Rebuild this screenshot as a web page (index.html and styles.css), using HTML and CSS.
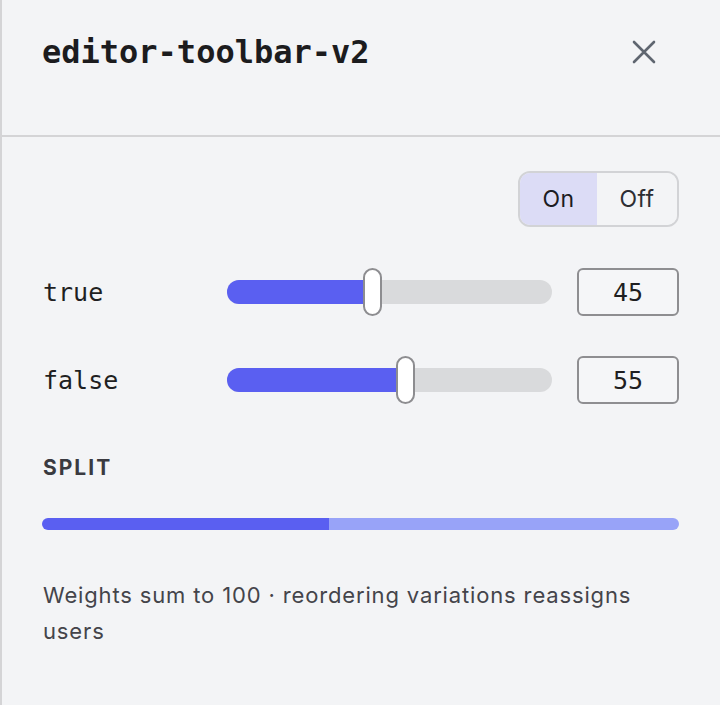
FILE: index.html
```html
<!DOCTYPE html>
<html>
<head>
<meta charset="utf-8">
<link rel="stylesheet" href="styles.css">
</head>
<body>
<aside class="panel">
  <header class="panel-header">
    <h1 class="title">editor-toolbar-v2</h1>
    <button class="close" aria-label="Close">
      <svg width="24" height="24" viewBox="0 0 24 24"><path d="M2 2L22 22M22 2L2 22" stroke="#5f6670" stroke-width="2.6" stroke-linecap="round" fill="none"/></svg>
    </button>
  </header>
  <section class="panel-body">
    <div class="toggle-row">
      <div class="segmented">
        <span class="seg seg-on">On</span>
        <span class="seg seg-off">Off</span>
      </div>
    </div>
    <div class="weights">
      <div class="weight-row">
        <span class="var-label">true</span>
        <div class="track"><div class="fill" style="width:45%"></div><div class="thumb" style="left:45%"></div></div>
        <div class="num">45</div>
      </div>
      <div class="weight-row">
        <span class="var-label">false</span>
        <div class="track"><div class="fill" style="width:55%"></div><div class="thumb" style="left:55%"></div></div>
        <div class="num">55</div>
      </div>
    </div>
    <h2 class="section-label">SPLIT</h2>
    <div class="split-bar">
      <div class="split-a" style="width:45%"></div>
      <div class="split-b" style="width:55%"></div>
    </div>
    <p class="note">Weights sum to 100 · reordering variations reassigns users</p>
  </section>
</aside>
</body>
</html>
```
FILE: styles.css
```css
* { box-sizing: border-box; }
html, body { margin: 0; padding: 0; }
body {
  width: 720px;
  height: 705px;
  background: #f3f4f6;
  font-family: Inter, "Noto Sans", sans-serif;
  overflow: hidden;
}
.panel {
  width: 720px;
  height: 705px;
  border-left: 2px solid #d4d4d6;
  background: #f3f4f6;
}
.panel-header {
  height: 137px;
  padding: 28px 64px 0 40px;
  border-bottom: 2px solid #d4d4d6;
  display: flex;
  align-items: flex-start;
  justify-content: space-between;
}
.title {
  margin: 0;
  font-family: "DejaVu Sans Mono", monospace;
  font-weight: bold;
  font-size: 32px;
  line-height: 48px;
  color: #1c1c1e;
}
.close {
  border: 0;
  background: none;
  padding: 0;
  margin-top: 12px;
  width: 24px;
  height: 24px;
  display: block;
}
.close svg { display: block; }
.panel-body {
  padding: 34px 41px 0 40px;
}
.toggle-row {
  display: flex;
  justify-content: flex-end;
}
.segmented {
  display: flex;
  border: 2px solid #d2d3d6;
  border-radius: 12px;
  overflow: hidden;
  height: 56px;
}
.seg {
  display: flex;
  align-items: center;
  justify-content: center;
  font-size: 23px;
  letter-spacing: 0.4px;
  color: #2e2e33;
  background: #f3f4f6;
}
.seg-on {
  width: 77px;
  background: #dcdcf6;
  color: #1c1c22;
}
.seg-off { width: 80px; }
.weights {
  margin-top: 41px;
  display: flex;
  flex-direction: column;
  gap: 40px;
}
.weight-row {
  display: grid;
  grid-template-columns: 160px 325px 102px;
  column-gap: 25px;
  align-items: center;
  height: 48px;
}
.var-label {
  font-family: "DejaVu Sans Mono", monospace;
  font-size: 25px;
  color: #1f1f22;
  padding-left: 1px;
}
.track {
  position: relative;
  height: 24px;
  border-radius: 12px;
  background: #d9dadc;
}
.fill {
  height: 100%;
  border-radius: 12px 0 0 12px;
  background: #5a5ff1;
}
.thumb {
  position: absolute;
  top: -12px;
  width: 19px;
  height: 48px;
  margin-left: -10px;
  background: #ffffff;
  border: 2px solid #8d8d90;
  border-radius: 10px;
}
.num {
  height: 48px;
  border: 2px solid #8e8e91;
  border-radius: 6px;
  background: #f5f6f8;
  display: flex;
  align-items: center;
  justify-content: center;
  font-family: "DejaVu Sans Mono", monospace;
  font-size: 25px;
  color: #1f1f22;
}
.section-label {
  margin: 49px 0 0 1px;
  font-size: 21px;
  line-height: 30px;
  font-weight: 700;
  letter-spacing: 2px;
  color: #3a3a40;
}
.split-bar {
  margin-top: 35px;
  height: 12px;
  border-radius: 6px;
  overflow: hidden;
  display: flex;
}
.split-a { background: #5a5ff1; }
.split-b { background: #98a3f8; }
.note {
  margin: 47px 0 0 1px;
  font-size: 22px;
  line-height: 36px;
  letter-spacing: 0.85px;
  color: #44444a;
}
```
